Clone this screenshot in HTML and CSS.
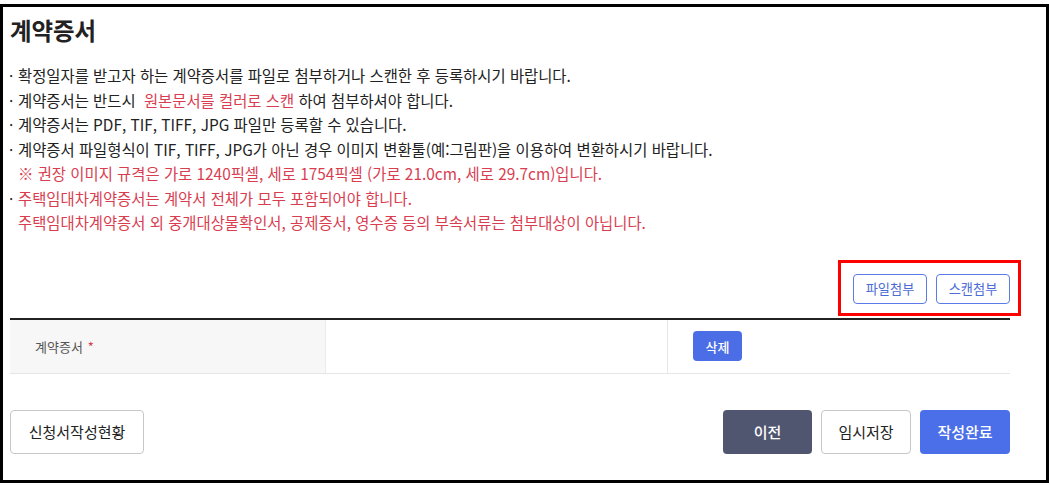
FILE: index.html
```html
<!DOCTYPE html>
<html lang="ko">
<head>
<meta charset="utf-8">
<link rel="stylesheet" href="styles.css">
</head>
<body>
<div class="frame">
  <h1 class="title">계약증서</h1>
  <ul class="notes">
    <li class="dot">확정일자를 받고자 하는 계약증서를 파일로 첨부하거나 스캔한 후 등록하시기 바랍니다.</li>
    <li class="dot">계약증서는 반드시 <span class="red hl">원본문서를 컬러로 스캔</span> 하여 첨부하셔야 합니다.</li>
    <li class="dot">계약증서는 PDF, TIF, TIFF, JPG 파일만 등록할 수 있습니다.</li>
    <li class="dot">계약증서 파일형식이 TIF, TIFF, JPG가 아닌 경우 이미지 변환툴(예:그림판)을 이용하여 변환하시기 바랍니다.</li>
    <li class="red">※ 권장 이미지 규격은 가로 1240픽셀, 세로 1754픽셀 (가로 21.0cm, 세로 29.7cm)입니다.</li>
    <li class="dot red">주택임대차계약증서는 계약서 전체가 모두 포함되어야 합니다.</li>
    <li class="red">주택임대차계약증서 외 중개대상물확인서, 공제증서, 영수증 등의 부속서류는 첨부대상이 아닙니다.</li>
  </ul>
  <div class="attach-row">
    <div class="attach-group">
      <button class="btn-outline-blue">파일첨부</button>
      <button class="btn-outline-blue">스캔첨부</button>
      <span class="highlight-box"></span>
    </div>
  </div>
  <div class="table">
    <div class="cell label">계약증서 <span class="req">*</span></div>
    <div class="cell file"></div>
    <div class="cell action"><button class="btn-del">삭제</button></div>
  </div>
  <div class="footer">
    <button class="btn btn-white btn-wide">신청서작성현황</button>
    <div class="footer-right">
      <button class="btn btn-dark">이전</button>
      <button class="btn btn-white">임시저장</button>
      <button class="btn btn-blue">작성완료</button>
    </div>
  </div>
</div>
</body>
</html>
```
FILE: styles.css
```css
* { box-sizing: border-box; }
html, body { margin: 0; padding: 0; background: #fff; }
body {
  font-family: "Noto Sans CJK KR", "Noto Sans", sans-serif;
  color: #222;
}
.frame {
  margin-top: 4px;
  width: 1049px;
  height: 479px;
  border: 3px solid #000;
  padding: 8px 36px 0 7px;
}
.title {
  margin: 0;
  font-size: 23.4px;
  line-height: 30px;
  font-weight: 700;
  color: #222;
}
.notes {
  list-style: none;
  margin: 18px 0 0 0;
  padding: 0;
  font-size: 15.4px;
  line-height: 24.5px;
}
.notes li { padding-left: 8px; position: relative; white-space: nowrap; }
.notes li.dot::before {
  content: "·";
  position: absolute;
  left: -1px;
  top: 0;
  color: #222;
}
.red { color: #d93d50; }
.hl { margin-left: 4px; }
.attach-row {
  display: flex;
  justify-content: flex-end;
  margin-top: 39px;
}
.attach-group {
  position: relative;
  display: flex;
  gap: 9px;
}
.btn-outline-blue {
  height: 30px;
  width: 74px;
  padding: 0;
  border: 1px solid #5b7ce8;
  border-radius: 4px;
  background: #fff;
  color: #4d6bd6;
  font-family: inherit;
  font-size: 13.2px;
}
.highlight-box {
  position: absolute;
  left: -15px;
  top: -14px;
  width: 183px;
  height: 56px;
  border: 3px solid #ff0000;
  pointer-events: none;
}
.table {
  margin-top: 14px;
  border-top: 2px solid #222;
  border-bottom: 1px solid #e6e6e6;
  display: grid;
  grid-template-columns: 315px 343px 1fr;
  height: 56px;
}
.cell { display: flex; align-items: center; }
.label {
  background: #f7f7f7;
  padding-left: 25px;
  font-size: 13px;
  color: #555;
}
.req { color: #d93d50; margin-left: 5px; }
.file { border-left: 1px solid #ececec; border-right: 1px solid #e6e6e6; }
.action { padding-left: 25px; }
.btn-del {
  width: 49px;
  height: 30px;
  padding: 0;
  border: none;
  border-radius: 4px;
  background: #4b6ee6;
  color: #fff;
  font-family: inherit;
  font-size: 13px;
  font-weight: 500;
}
.footer {
  margin-top: 36px;
  display: flex;
  justify-content: space-between;
}
.footer-right { display: flex; gap: 9px; }
.btn {
  height: 44px;
  width: 90px;
  padding: 0;
  border-radius: 4px;
  font-family: inherit;
  font-size: 15px;
}
.btn-wide { width: 134px; }
.btn-white { background: #fff; border: 1px solid #c8c8c8; color: #222; }
.btn-dark { background: #50566f; border: none; color: #fff; font-weight: 500; width: 89px; }
.btn-blue { background: #4b6fe9; border: none; color: #fff; font-weight: 500; }
```
